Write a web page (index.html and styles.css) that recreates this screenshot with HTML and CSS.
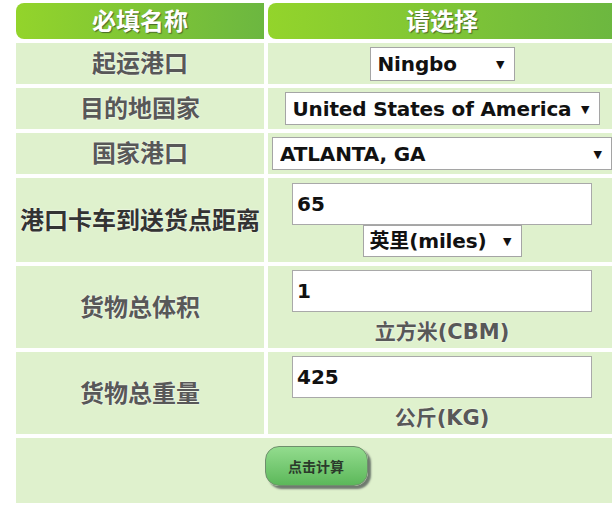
FILE: index.html
```html
<!DOCTYPE html>
<html lang="zh-CN">
<head>
    <meta charset="UTF-8">
    <meta name="viewport" content="width=device-width, initial-scale=1.0">
    <title>卡车运费计算</title>
    <link rel="stylesheet" href="styles.css">
</head>
<body>
    <div class="calc">
        <!-- Header -->
        <div class="head">必填名称</div>
        <div class="head">请选择</div>

        <!-- Port of loading -->
        <div class="label">起运港口</div>
        <div class="field">
            <span class="pick">
                <select class="select select-port">
                    <option>Ningbo</option>
                </select>
            </span>
        </div>

        <!-- Destination country -->
        <div class="label">目的地国家</div>
        <div class="field">
            <span class="pick">
                <select class="select select-country">
                    <option>United States of America</option>
                </select>
            </span>
        </div>

        <!-- Destination port -->
        <div class="label">国家港口</div>
        <div class="field">
            <span class="pick">
                <select class="select select-dest">
                    <option>ATLANTA, GA</option>
                </select>
            </span>
        </div>

        <!-- Distance -->
        <div class="label label-dark">港口卡车到送货点距离</div>
        <div class="field field-stack">
            <input class="input" type="text" value="65">
            <span class="pick">
                <select class="select select-unit">
                    <option>英里(miles)</option>
                </select>
            </span>
        </div>

        <!-- Volume -->
        <div class="label">货物总体积</div>
        <div class="field field-stack">
            <input class="input" type="text" value="1">
            <div class="unit">立方米(CBM)</div>
        </div>

        <!-- Weight -->
        <div class="label">货物总重量</div>
        <div class="field field-stack">
            <input class="input" type="text" value="425">
            <div class="unit">公斤(KG)</div>
        </div>

        <!-- Submit -->
        <div class="footer">
            <button class="button" type="button">点击计算</button>
        </div>
    </div>
</body>
</html>
```

FILE: styles.css
```css
body {
    margin: 0;
    background-color: #fff;
    font-family: "DejaVu Sans", "Noto Sans CJK SC", sans-serif;
    overflow: hidden;
}
.calc {
    display: grid;
    grid-template-columns: 248px 348px;
    grid-template-rows: 36px 41px 41px 41px 84px 82px 82px 65px;
    gap: 4px;
    padding: 3px 0 0 16px;
    width: 600px;
}
.head {
    display: flex;
    justify-content: center;
    align-items: center;
    padding-bottom: 2px;
    border-radius: 8px 0 0 8px;
    background: linear-gradient(to right, #93d42b, #6cb740);
    color: #fff;
    font-family: "Noto Sans CJK SC", sans-serif;
    font-size: 24px;
    font-weight: bold;
    line-height: 1;
    text-shadow: 1px 1px 1px #4a6a2a;
}
.label {
    display: flex;
    justify-content: center;
    align-items: center;
    padding-bottom: 3px;
    background-color: #dff1cd;
    color: #585858;
    font-family: "Noto Sans CJK SC", sans-serif;
    font-size: 24px;
    font-weight: bold;
    line-height: 1;
    text-shadow: 0 0 2px #fff;
}
.label-dark {
    color: #333;
}
.field {
    display: flex;
    justify-content: center;
    align-items: center;
    background-color: #dff1cd;
}
.field-stack {
    flex-direction: column;
}
.pick {
    position: relative;
    display: inline-block;
}
.pick::after {
    content: "▼";
    position: absolute;
    right: 10px;
    top: 50%;
    transform: translateY(-50%);
    font-size: 11px;
    color: #111;
    pointer-events: none;
}
.select {
    appearance: none;
    -webkit-appearance: none;
    display: block;
    box-sizing: border-box;
    height: 34px;
    margin: 0;
    padding: 0 0 0 7px;
    border: 1px solid #a5a5a5;
    border-radius: 0;
    background-color: #fff;
    color: #111;
    font-family: "DejaVu Sans", "Noto Sans CJK SC", sans-serif;
    font-size: 20px;
    font-weight: bold;
    letter-spacing: -0.15px;
}
.select-port {
    width: 145px;
}
.select-country {
    width: 315px;
    height: 33px;
}
.select-dest {
    width: 340px;
    height: 33px;
}
.select-unit {
    width: 159px;
    height: 32px;
    padding-left: 6px;
}
.input {
    box-sizing: border-box;
    width: 300px;
    height: 42px;
    margin: 0;
    padding: 0 4px;
    border: 1px solid #a9a9a9;
    background-color: #fff;
    color: #111;
    font-family: "DejaVu Sans", sans-serif;
    font-size: 20px;
    font-weight: bold;
}
.unit {
    margin-top: 3px;
    color: #585858;
    font-family: "DejaVu Sans", "Noto Sans CJK SC", sans-serif;
    font-size: 21px;
    font-weight: bold;
    text-shadow: 0 0 2px #fff;
}
.footer {
    grid-column: 1 / 3;
    display: flex;
    justify-content: center;
    align-items: flex-start;
    padding-top: 8px;
    background-color: #dff1cd;
}
.button {
    width: 103px;
    height: 40px;
    border: 1px solid #6e8f6c;
    border-radius: 14px;
    background: linear-gradient(#93dc8e, #5cb85a);
    box-shadow: 3px 3px 2px #6f7a6f;
    color: #2b3a2b;
    font-family: "Noto Sans CJK SC", sans-serif;
    font-size: 14px;
    font-weight: bold;
    cursor: pointer;
}
```
